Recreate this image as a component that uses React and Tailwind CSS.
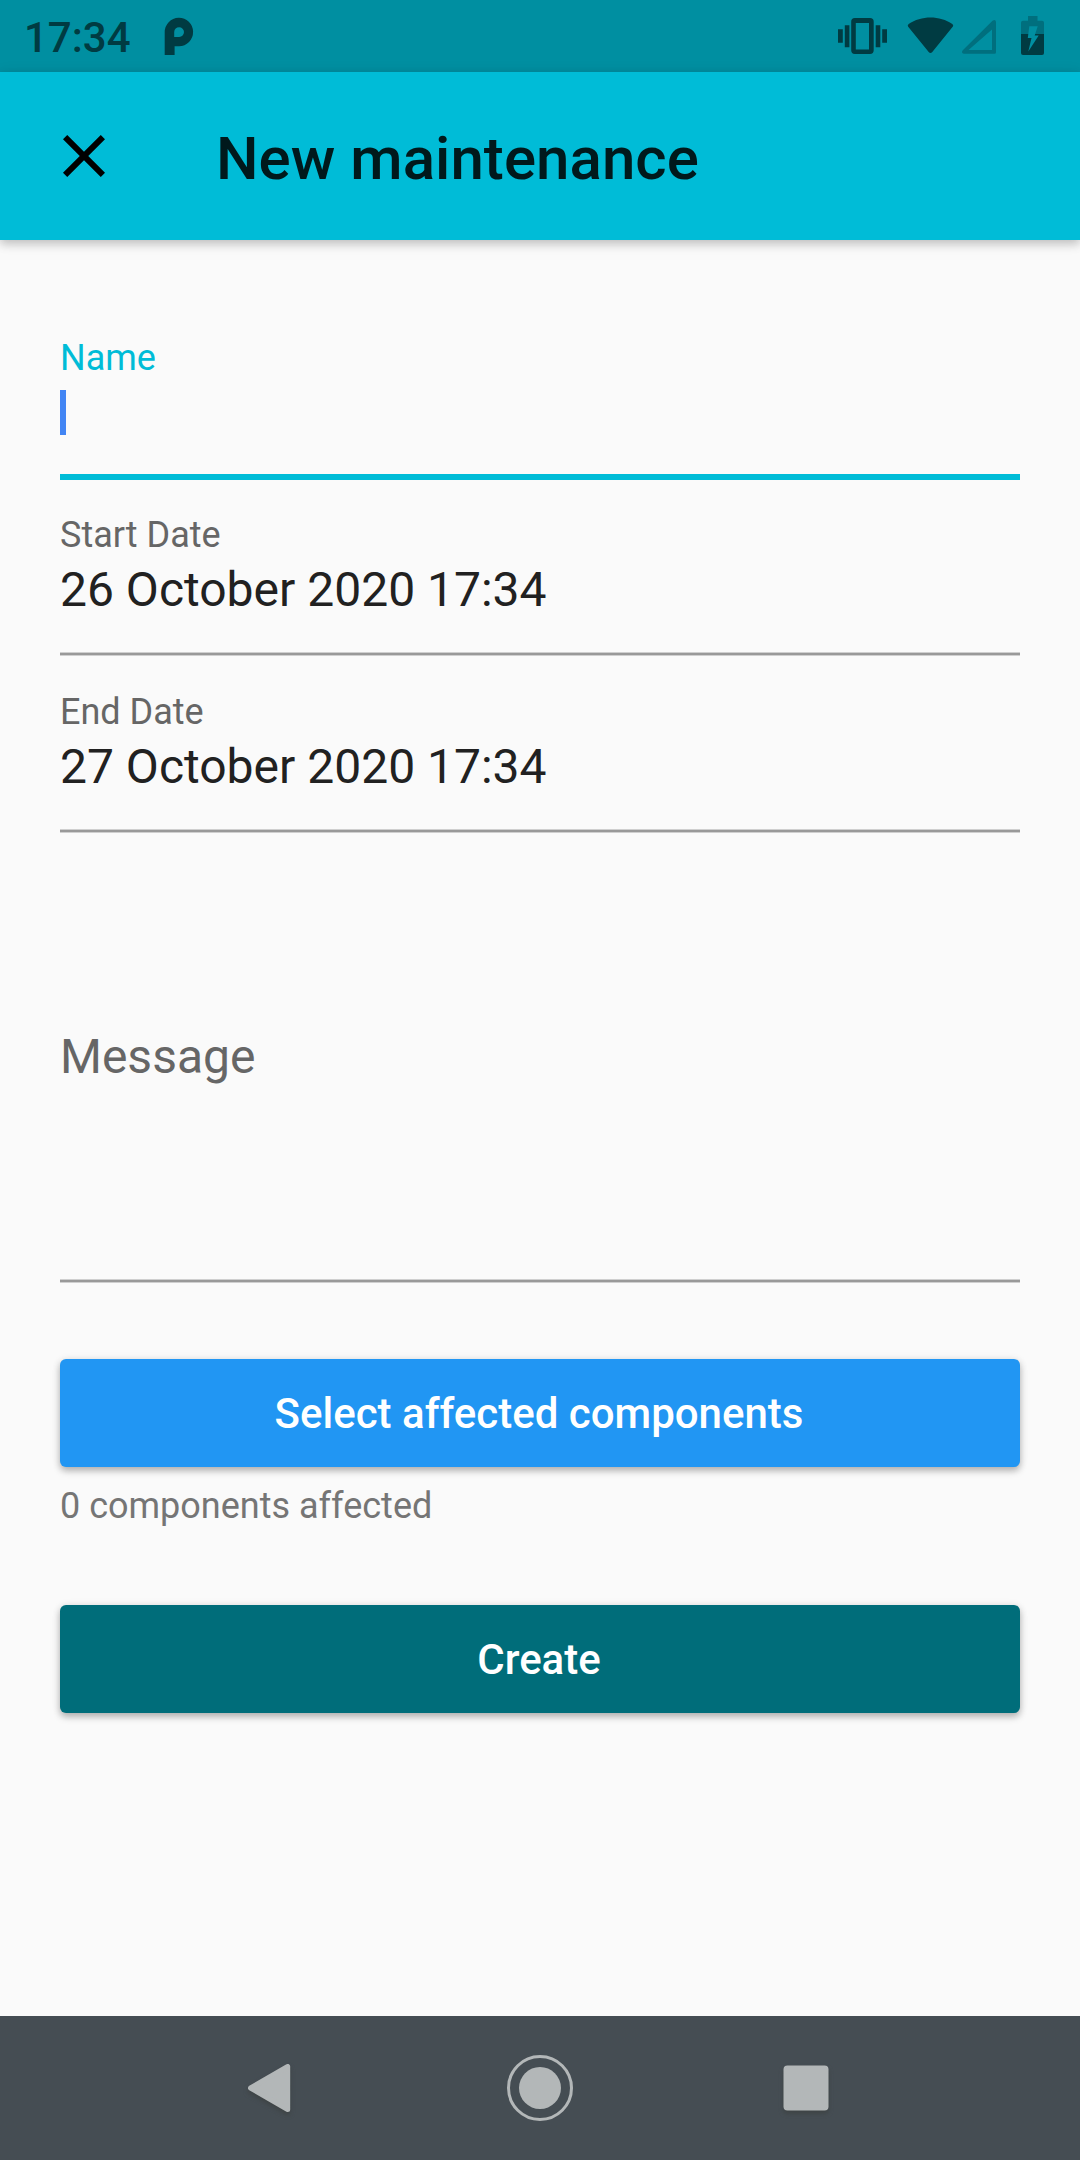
import React from "react";

function StatusBar() {
  return (
    <div className="flex h-[72px] shrink-0 items-center bg-[#008fa1]">
      <span className="mt-[3px] ml-[24px] w-[112px] whitespace-nowrap text-[42px] leading-[50px] font-medium text-[#003b42]">
        17:34
      </span>
      <svg className="ml-[24px] h-[72px] w-[40px]" viewBox="160 0 40 72" fill="#003b42">
        <path
          fillRule="evenodd"
          d="M164.7 55V32.3A14.2 14.2 0 1 1 179 46.2H174.6V55ZM174.2 37H179.2A4.9 4.9 0 1 0 174.2 32Z"
        />
      </svg>
      <svg className="ml-auto h-[72px] w-[250px]" viewBox="830 0 250 72" fill="#003b42">
        <path
          fillRule="evenodd"
          d="M855 18H870A3.7 3.7 0 0 1 873.7 21.7V50.3A3.7 3.7 0 0 1 870 54H855A3.7 3.7 0 0 1 851.2 50.3V21.7A3.7 3.7 0 0 1 855 18ZM855.8 23V49.5H869V23Z"
        />
        <path d="M838 29.3h4.8v13.5H838zM844.8 25.3h4.6v22h-4.6zM875.7 25.3h4.6v22h-4.6zM882.2 29.3h4.8v13.5h-4.8z" />
        <path d="M908 26.6Q907.2 25 908.7 24C921 15.2 940 15.2 952.3 24Q953.8 25 952.9 26.6L932.3 52Q930.5 54 928.7 52Z" />
        <path
          fill="#006f7e"
          fillRule="evenodd"
          d="M963.8 53.7Q960.6 52.8 963 50L992.5 20.7Q995.6 18.8 996 22V52.2Q996 53.7 994.5 53.7ZM968.5 50H992V29.5Z"
        />
        <path fill="#006f7e" d="M1028 16h9.5v4.700h4.500a2 2 0 0 1 2 2V34h-23V22.700a2 2 0 0 1 2-2h5z" />
        <path d="M1021 34h23v19a2 2 0 0 1-2 2h-19a2 2 0 0 1-2-2z" />
        <path fill="#008fa1" d="M1029.3 26.3H1037.7L1034.7 35.5H1038.7L1028.3 51.5L1031.5 37.9H1027.8Z" />
      </svg>
    </div>
  );
}

function AppBar() {
  return (
    <header className="relative flex h-[168px] shrink-0 items-center bg-[#00bcd7] pl-[48px] shadow-[0_4px_9px_rgba(0,0,0,0.2),0_2px_16px_rgba(0,0,0,0.07)]">
      <svg className="size-[72px] shrink-0" viewBox="0 0 24 24">
        <path d="M19 6.41 17.59 5 12 10.59 6.41 5 5 6.41 10.59 12 5 17.59 6.41 19 12 13.41 17.59 19 19 17.59 13.41 12z" />
      </svg>
      <h1 className="mt-[5px] ml-[96px] text-[60px] leading-[72px] font-medium tracking-[0.05px] text-[#00191c]">
        New maintenance
      </h1>
    </header>
  );
}

function Underline() {
  return (
    <div className="flex h-[4px] flex-col border-y border-[#cfcfcf] bg-[#999999]" />
  );
}

function DateField({ label, value }) {
  return (
    <div className="flex h-[177px] flex-col pt-[34px]">
      <div className="text-[36px] leading-[42px] text-[#666666]">{label}</div>
      <div className="mt-[6px] mb-[34px] text-[48px] leading-[56px] text-[#212121]">{value}</div>
      <Underline />
    </div>
  );
}

function Button({ children, className }) {
  return (
    <button
      className={
        "h-[108px] w-full rounded-[6px] pt-[2px] pr-[2px] text-[42px] leading-[50px] font-medium text-white shadow-[0_4px_7px_rgba(0,0,0,0.25),0_1px_9px_rgba(0,0,0,0.1)] " +
        className
      }
    >
      {children}
    </button>
  );
}

function NavBar() {
  return (
    <nav className="flex h-[144px] shrink-0 items-center bg-[#454d53] pl-[234px]">
      <svg className="size-[72px] drop-shadow-[0_3px_2px_rgba(60,65,65,0.8)]" viewBox="0 0 72 72">
        <path
          d="M16.5 36 53.7 14.5V57.5Z"
          fill="#b3b7b8"
          stroke="#b3b7b8"
          strokeWidth="5"
          strokeLinejoin="round"
        />
      </svg>
      <svg className="ml-[198px] size-[72px]" viewBox="0 0 72 72">
        <circle cx="36" cy="36" r="31.5" fill="none" stroke="#b3b7b8" strokeWidth="3" />
        <circle cx="36" cy="36" r="21" fill="#b3b7b8" />
      </svg>
      <svg className="ml-[194px] size-[72px] drop-shadow-[0_3px_2px_rgba(60,65,65,0.8)]" viewBox="0 0 72 72">
        <rect x="13.5" y="13.5" width="45" height="45" rx="4" fill="#b3b7b8" />
      </svg>
    </nav>
  );
}

export default function App() {
  return (
    <div className="flex h-[2160px] w-[1080px] flex-col bg-[#fafafa] font-['Roboto',sans-serif]">
      <StatusBar />
      <AppBar />
      <main className="flex grow flex-col px-[60px]">
        <div className="flex h-[240px] flex-col pt-[97px]">
          <div className="text-[36px] leading-[42px] text-[#00bcd7]">Name</div>
          <div className="mt-[11px] h-[45px] w-[6px] bg-[#4285f4]" />
          <div className="mt-[39px] h-[6px] bg-[#00bcd7]" />
        </div>
        <DateField label="Start Date" value="26 October 2020 17:34" />
        <DateField label="End Date" value="27 October 2020 17:34" />
        <div className="flex h-[449px] flex-col pt-[195px]">
          <div className="text-[48px] leading-[56px] text-[#666666]">Message</div>
          <div className="mt-auto">
            <Underline />
          </div>
        </div>
        <div className="mt-[76px] flex flex-col">
          <Button className="bg-[#2196f3]">Select affected components</Button>
          <p className="mt-[18px] text-[36px] leading-[42px] text-[#757575]">0 components affected</p>
        </div>
        <div className="mt-[78px] flex">
          <Button className="bg-[#006d7a]">Create</Button>
        </div>
      </main>
      <NavBar />
    </div>
  );
}
